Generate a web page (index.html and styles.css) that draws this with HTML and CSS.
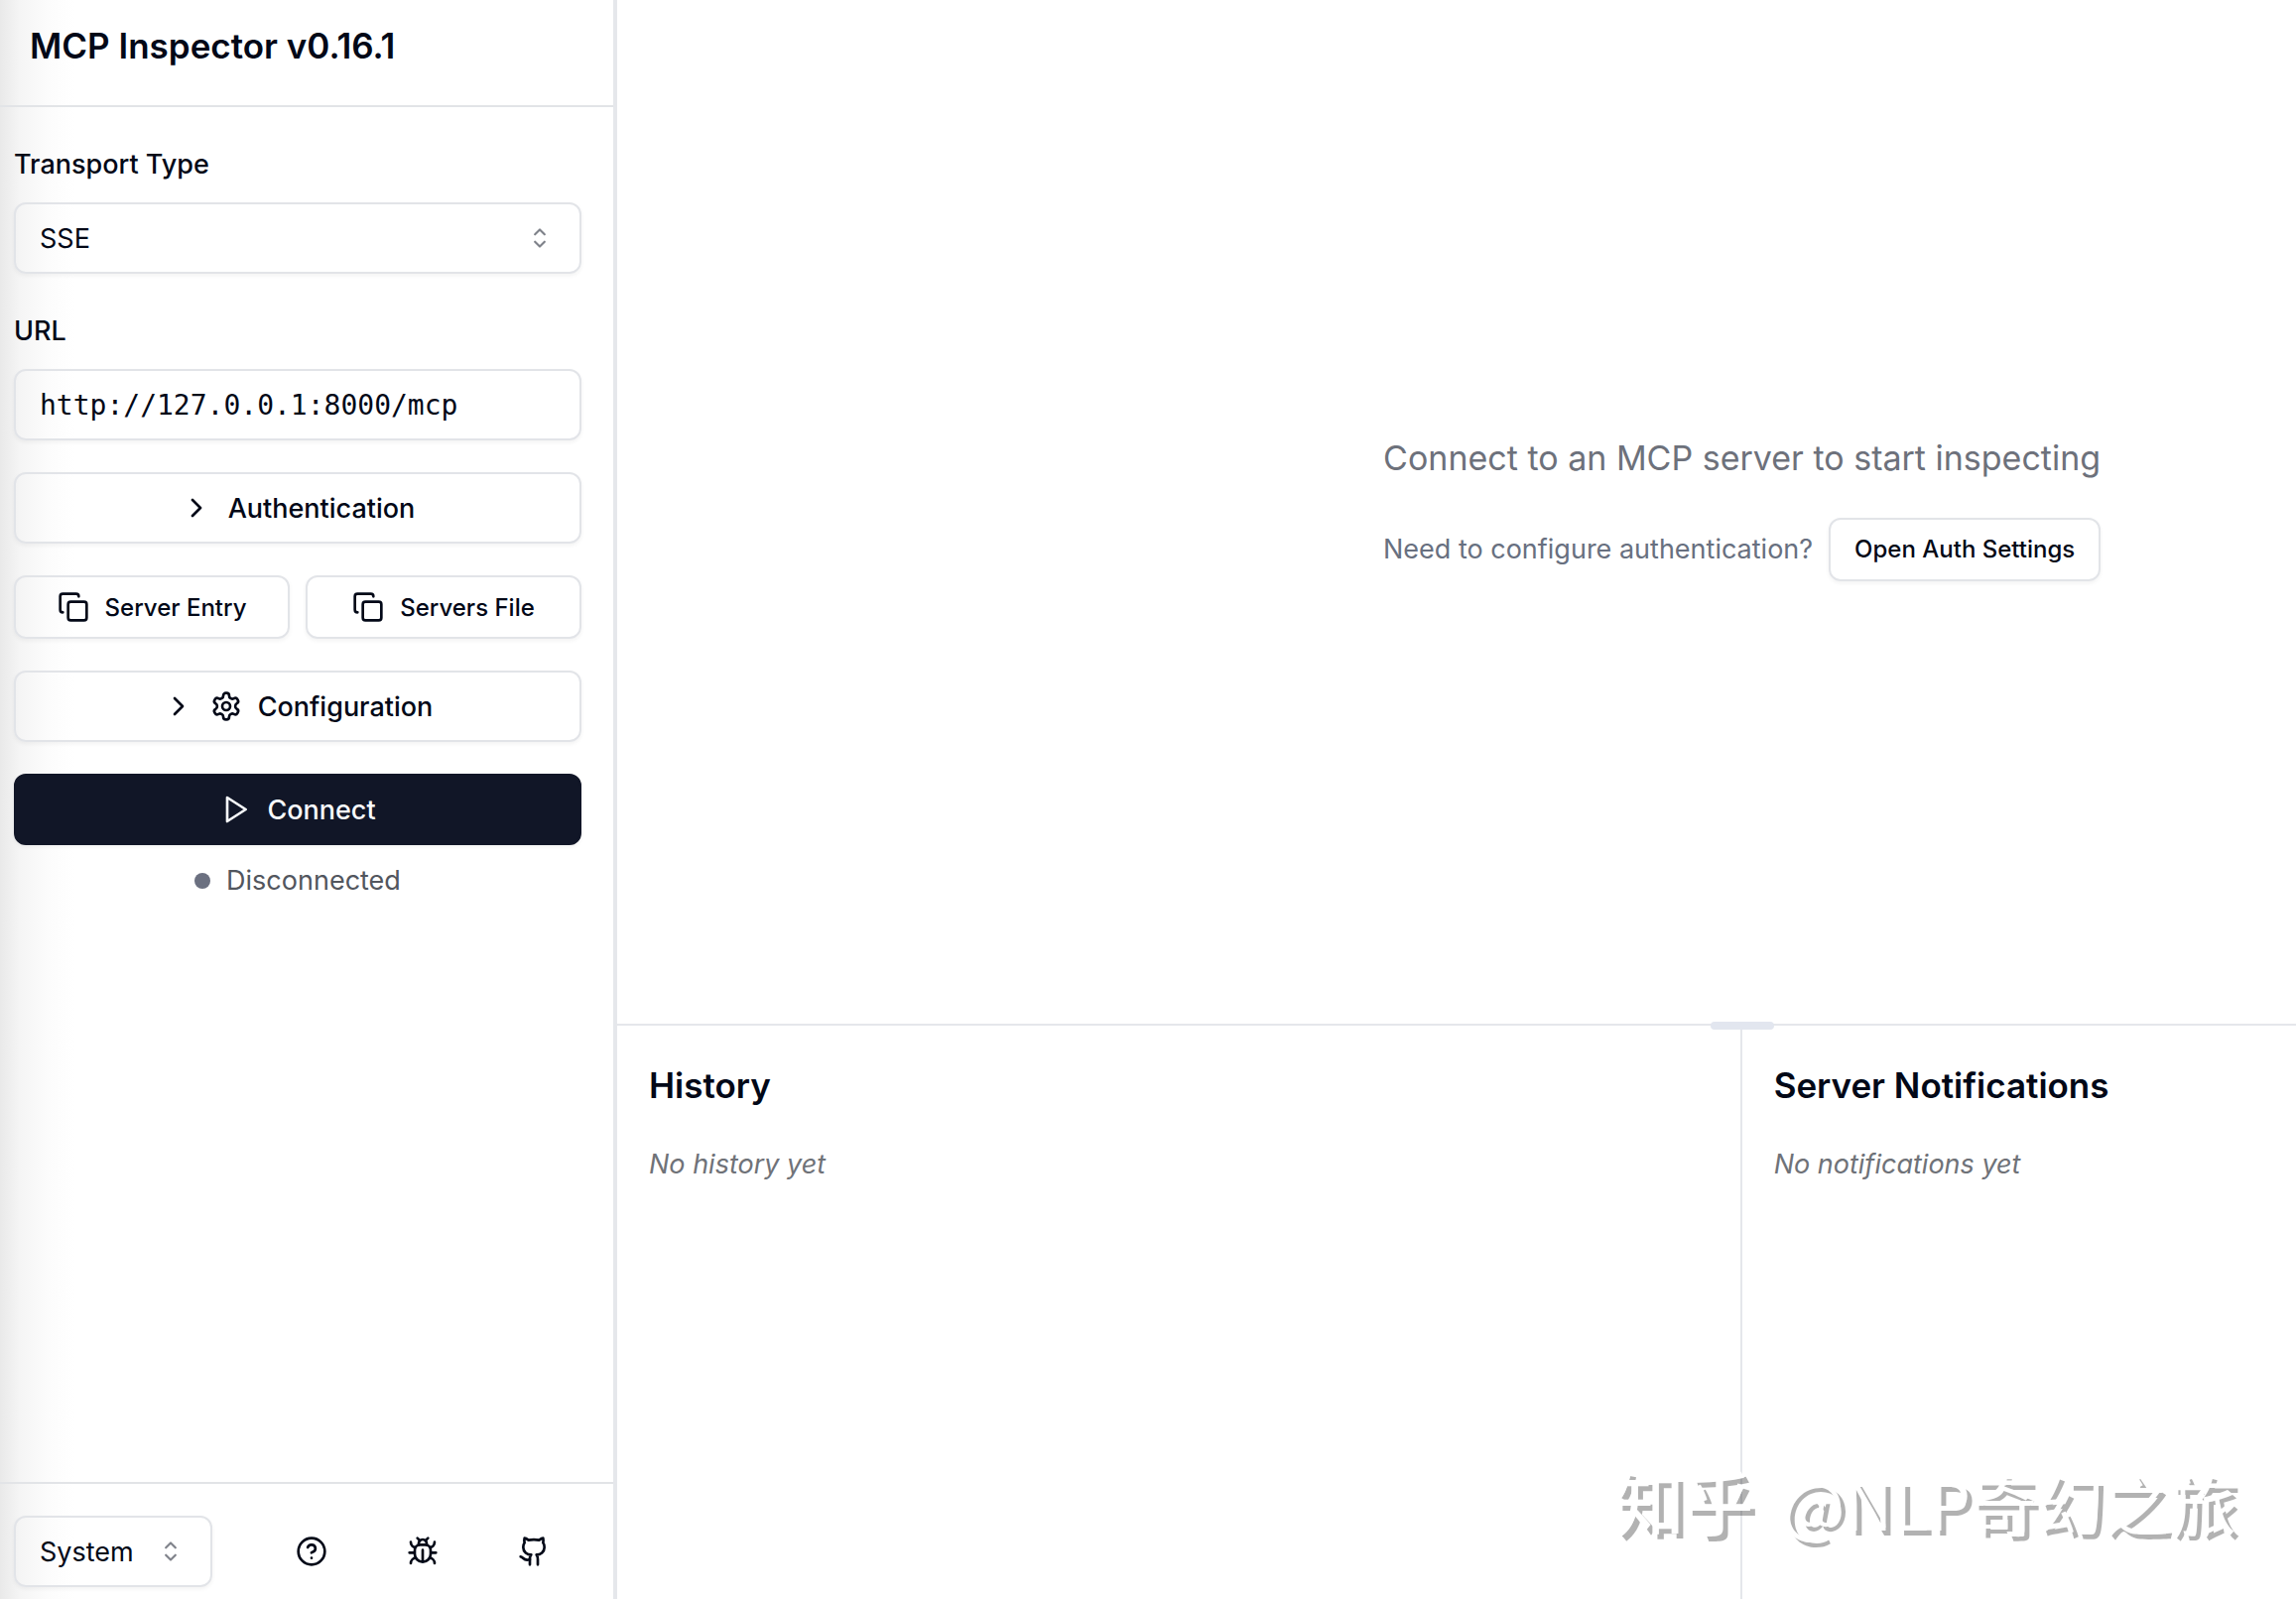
FILE: index.html
```
<!DOCTYPE html>
<html lang="en">
<head>
   <meta charset="UTF-8">
   <title>MCP Inspector</title>
   <link rel="stylesheet" href="styles.css">
</head>
<body>
   <div class="app">

      <!-- Sidebar -->
      <aside class="sidebar">
         <header class="sidebar-header">
            <h1>MCP Inspector v0.16.1</h1>
         </header>

         <div class="sidebar-content">
            <div class="field">
               <label for="transport">Transport Type</label>
               <div class="select-wrapper">
                  <select id="transport">
                     <option>SSE</option>
                  </select>
                  <svg class="caret" viewBox="0 0 15 15"><path d="M5.25 5.75 7.5 3.5l2.25 2.25M5.25 9.25 7.5 11.5l2.25-2.25"/></svg>
               </div>
            </div>

            <div class="field">
               <label for="url">URL</label>
               <input type="text" id="url" value="http://127.0.0.1:8000/mcp" spellcheck="false">
            </div>

            <button class="btn">
               <svg class="icon" viewBox="0 0 24 24"><path d="m9 18 6-6-6-6"/></svg>
               Authentication
            </button>

            <div class="button-row">
               <button class="btn btn-small">
                  <svg class="icon" viewBox="0 0 24 24"><rect width="14" height="14" x="8" y="8" rx="2"/><path d="M4 16c-1.1 0-2-.9-2-2V4c0-1.1.9-2 2-2h10c1.1 0 2 .9 2 2"/></svg>
                  Server Entry
               </button>
               <button class="btn btn-small">
                  <svg class="icon" viewBox="0 0 24 24"><rect width="14" height="14" x="8" y="8" rx="2"/><path d="M4 16c-1.1 0-2-.9-2-2V4c0-1.1.9-2 2-2h10c1.1 0 2 .9 2 2"/></svg>
                  Servers File
               </button>
            </div>

            <button class="btn">
               <svg class="icon" viewBox="0 0 24 24"><path d="m9 18 6-6-6-6"/></svg>
               <svg class="icon" viewBox="0 0 24 24"><path d="M12.22 2h-.44a2 2 0 0 0-2 2v.18a2 2 0 0 1-1 1.73l-.43.25a2 2 0 0 1-2 0l-.15-.08a2 2 0 0 0-2.73.73l-.22.38a2 2 0 0 0 .73 2.73l.15.1a2 2 0 0 1 1 1.72v.51a2 2 0 0 1-1 1.74l-.15.09a2 2 0 0 0-.73 2.73l.22.38a2 2 0 0 0 2.73.73l.15-.08a2 2 0 0 1 2 0l.43.25a2 2 0 0 1 1 1.73V20a2 2 0 0 0 2 2h.44a2 2 0 0 0 2-2v-.18a2 2 0 0 1 1-1.73l.43-.25a2 2 0 0 1 2 0l.15.08a2 2 0 0 0 2.73-.73l.22-.39a2 2 0 0 0-.73-2.73l-.15-.08a2 2 0 0 1-1-1.74v-.5a2 2 0 0 1 1-1.74l.15-.09a2 2 0 0 0 .73-2.73l-.22-.38a2 2 0 0 0-2.73-.73l-.15.08a2 2 0 0 1-2 0l-.43-.25a2 2 0 0 1-1-1.73V4a2 2 0 0 0-2-2z"/><circle cx="12" cy="12" r="3"/></svg>
               Configuration
            </button>

            <div class="connect">
               <button class="btn btn-primary">
                  <svg class="icon" viewBox="0 0 24 24"><path d="m6 3 14 9-14 9z"/></svg>
                  Connect
               </button>
               <div class="status">
                  <span class="status-dot"></span>
                  <span>Disconnected</span>
               </div>
            </div>
         </div>

         <footer class="sidebar-footer">
            <div class="select-wrapper">
               <select id="theme" aria-label="Theme">
                  <option>System</option>
               </select>
               <svg class="caret" viewBox="0 0 15 15"><path d="M5.25 5.75 7.5 3.5l2.25 2.25M5.25 9.25 7.5 11.5l2.25-2.25"/></svg>
            </div>
            <nav class="links">
               <a href="#docs" aria-label="Documentation">
                  <svg class="icon" viewBox="0 0 24 24"><circle cx="12" cy="12" r="10"/><path d="M9.09 9a3 3 0 0 1 5.83 1c0 2-3 3-3 3"/><path d="M12 17h.01"/></svg>
               </a>
               <a href="#debug" aria-label="Debugging guide">
                  <svg class="icon" viewBox="0 0 24 24"><path d="m8 2 1.88 1.88M14.12 3.88 16 2M9 7.13v-1a3.003 3.003 0 1 1 6 0v1"/><path d="M12 20c-3.3 0-6-2.7-6-6v-3a4 4 0 0 1 4-4h4a4 4 0 0 1 4 4v3c0 3.3-2.7 6-6 6M12 20v-9M6.53 9C4.6 8.8 3 7.1 3 5M6 13H2M3 21c0-2.1 1.7-3.9 3.8-4M20.97 5c0 2.1-1.6 3.8-3.5 4M22 13h-4M17.2 17c2.1.1 3.8 1.9 3.8 4"/></svg>
               </a>
               <a href="#github" aria-label="GitHub">
                  <svg class="icon" viewBox="0 0 24 24"><path d="M15 22v-4a4.8 4.8 0 0 0-1-3.5c3 0 6-2 6-5.5.08-1.25-.27-2.48-1-3.5.28-1.15.28-2.35 0-3.5 0 0-1 0-3 1.5-2.64-.5-5.36-.5-8 0C6 2 5 2 5 2c-.3 1.15-.3 2.35 0 3.5A5.403 5.403 0 0 0 4 9c0 3.5 3 5.5 6 5.5-.39.49-.68 1.05-.85 1.65-.17.6-.22 1.23-.15 1.85v4"/><path d="M9 18c-4.51 2-5-2-7-2"/></svg>
               </a>
            </nav>
         </footer>
      </aside>

      <!-- Main area -->
      <main class="main">
         <section class="empty-state">
            <p class="empty-title">Connect to an MCP server to start inspecting</p>
            <div class="empty-auth">
               <p>Need to configure authentication?</p>
               <button class="btn btn-small">Open Auth Settings</button>
            </div>
         </section>

         <!-- Bottom panels -->
         <div class="panels">
            <div class="drag-handle"></div>
            <section class="panel">
               <h2>History</h2>
               <p>No history yet</p>
            </section>
            <section class="panel">
               <h2>Server Notifications</h2>
               <p>No notifications yet</p>
            </section>
         </div>
      </main>
   </div>

   <div class="watermark">
      <span class="watermark-brand">知乎</span>
      <span>@NLP奇幻之旅</span>
   </div>
</body>
</html>
```

FILE: styles.css
```
* {
   margin: 0;
   padding: 0;
   box-sizing: border-box;
}

body {
   background: #fff;
   color: #020817;
   font-family: Inter, "Liberation Sans", sans-serif;
   font-size: 28px;
   line-height: 40px;
}

h1, h2 {
   font-size: 35px;
   line-height: 56px;
   font-weight: 600;
}

.app {
   display: flex;
   height: 100vh;
}

/* Sidebar */
.sidebar {
   flex: 0 0 622px;
   display: flex;
   flex-direction: column;
   border-right: 4px solid #e5e7eb;
   background: linear-gradient(to right, #e9e9e9 0, #f5f5f5 20px, #fcfcfc 48px, #fff 76px);
}

.sidebar-header {
   padding: 18px 30px 32px;
   border-bottom: 2px solid #e2e4e7;
}

.sidebar-content {
   flex: 1;
   display: flex;
   flex-direction: column;
   gap: 32px;
   padding: 32px 32px 32px 14px;
}

.field {
   display: flex;
   flex-direction: column;
   gap: 12px;
}

.field label {
   line-height: 52px;
   font-size: 27px;
   font-weight: 500;
}

/* Inputs and selects */
select,
input {
   width: 100%;
   height: 72px;
   padding: 0 24px;
   border: 2px solid #e2e4e8;
   border-radius: 12px;
   background: transparent;
   box-shadow: 0 2px 4px rgba(0, 0, 0, 0.05);
   color: inherit;
   font-family: inherit;
   font-size: 27px;
}

select {
   appearance: none;
}

input {
   font-family: "DejaVu Sans Mono", monospace;
   font-size: 28px;
}

.select-wrapper {
   position: relative;
}

.caret {
   position: absolute;
   right: 26px;
   top: 20px;
   width: 32px;
   height: 32px;
   fill: none;
   stroke: currentColor;
   stroke-linecap: round;
   stroke-linejoin: round;
   opacity: 0.5;
   pointer-events: none;
}

/* Buttons */
.btn {
   display: flex;
   align-items: center;
   justify-content: center;
   gap: 16px;
   height: 72px;
   padding: 0 24px;
   border: 2px solid #e2e4e8;
   border-radius: 12px;
   background: transparent;
   box-shadow: 0 2px 4px rgba(0, 0, 0, 0.05);
   color: inherit;
   font-family: inherit;
   font-size: 27px;
   font-weight: 500;
   white-space: nowrap;
   cursor: pointer;
}

.btn-small {
   height: 64px;
   font-size: 24px;
}

.btn-primary {
   width: 100%;
   border-color: #111627;
   background: #111627;
   color: #f8fafc;
}

.button-row {
   display: grid;
   grid-template-columns: 1fr 1fr;
   gap: 16px;
}

.icon {
   flex: none;
   width: 32px;
   height: 32px;
   fill: none;
   stroke: currentColor;
   stroke-width: 2;
   stroke-linecap: round;
   stroke-linejoin: round;
}

.connect {
   display: flex;
   flex-direction: column;
   gap: 16px;
}

.status {
   display: flex;
   align-items: center;
   justify-content: center;
   gap: 16px;
   color: #52565e;
   font-size: 27px;
}

.status-dot {
   width: 16px;
   height: 16px;
   border-radius: 50%;
   background: #6b7080;
}

.sidebar-footer {
   display: flex;
   justify-content: space-between;
   padding: 32px 32px 12px 14px;
   border-top: 2px solid #e2e4e7;
}

.sidebar-footer .select-wrapper {
   width: 200px;
}

.links {
   display: flex;
   gap: 16px;
}

.links a {
   display: flex;
   align-items: center;
   justify-content: center;
   width: 96px;
   color: inherit;
}

/* Main area */
.main {
   flex: 1;
   display: flex;
   flex-direction: column;
}

.empty-state {
   flex: 1;
   display: flex;
   flex-direction: column;
   align-items: center;
   justify-content: center;
   gap: 32px;
   padding: 0 0 12px 34%;
}

.empty-title {
   color: #6d717b;
   font-size: 34px;
   line-height: 56px;
}

.empty-auth {
   display: flex;
   align-items: center;
   gap: 16px;
   color: #687080;
   font-size: 27px;
}

.empty-auth .btn {
   color: #020817;
}

/* History and notifications */
.panels {
   position: relative;
   display: grid;
   grid-template-columns: 67% 1fr;
   height: 36vh;
   border-top: 2px solid #e5e7eb;
}

.panel {
   padding: 32px;
}

.panel:nth-of-type(1) {
   border-right: 2px solid #e5e7eb;
}

.panel h2 {
   margin-bottom: 32px;
}

.panel p {
   color: #6f7278;
   font-size: 27px;
   font-style: italic;
}

.drag-handle {
   position: absolute;
   top: -4px;
   left: 67%;
   width: 64px;
   height: 8px;
   margin-left: -32px;
   border-radius: 4px;
   background: #e2e6ef;
}

.watermark {
   position: absolute;
   right: 60px;
   bottom: 48px;
   display: flex;
   align-items: baseline;
   gap: 28px;
   color: #fff;
   font-family: "Noto Sans CJK SC", sans-serif;
   font-size: 67px;
   line-height: 100px;
   text-shadow: 5px 5px 0 rgba(0, 0, 0, 0.3);
}

.watermark-brand {
   font-size: 70px;
   font-weight: 500;
}
```
